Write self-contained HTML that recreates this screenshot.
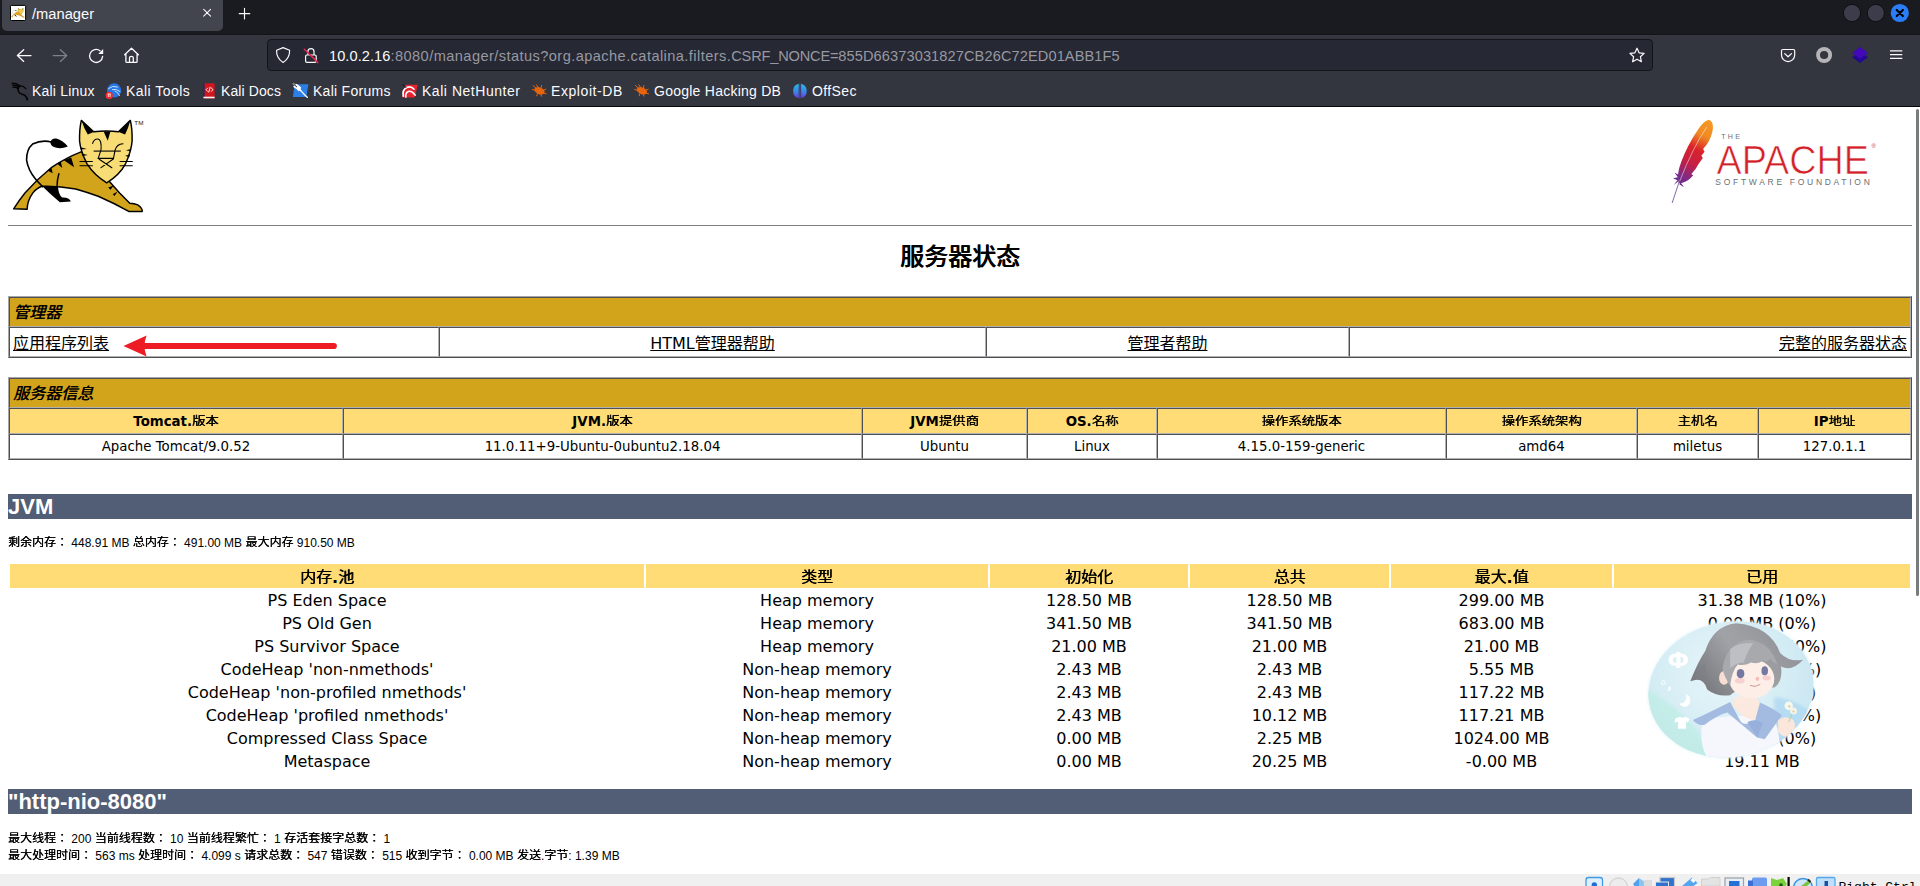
<!DOCTYPE html>
<html>
<head>
<meta charset="utf-8">
<title>/manager</title>
<style>
html,body{margin:0;padding:0;}
body{width:1920px;height:886px;overflow:hidden;position:relative;background:#fff;font-family:"Liberation Sans","Noto Sans CJK JP",sans-serif;color:#000;}
.abs{position:absolute;}
/* ---------- browser chrome ---------- */
#tabbar{left:0;top:0;width:1920px;height:35px;background:#1a1b20;}
#tab{left:2px;top:0;width:221px;height:31px;background:#43454e;border-radius:0 0 5px 5px;}
#tabtitle{left:32px;top:5.3px;font-size:14.7px;line-height:18px;color:#fbfbfe;white-space:nowrap;}
#toolbar{left:0;top:35px;width:1920px;height:71px;background:#33353f;}
#chromeline{left:0;top:106px;width:1920px;height:1px;background:#07080c;}
#urlbar{left:267px;top:39px;width:1384px;height:30px;background:#262833;border:1px solid #14151a;border-radius:4px;box-sizing:content-box;}
#url{left:329px;top:46.7px;font-size:14.6px;letter-spacing:0.245px;line-height:18px;color:#9899a2;white-space:nowrap;}
#url b{font-weight:normal;color:#fbfbfe;}
#u1{letter-spacing:0.07px;}
#u2{letter-spacing:0.43px;}
#u3{letter-spacing:-0.18px;}
#u4{letter-spacing:0.10px;}
.bm{top:82px;font-size:14px;line-height:18px;color:#fbfbfe;white-space:nowrap;}
/* ---------- page ---------- */
.cj{font-weight:500;text-shadow:0.55px 0 0 currentColor;}
.hdr .cj{font-weight:400;text-shadow:0.5px 0 0 currentColor;display:inline-block;transform:scaleY(0.88);transform-origin:50% 48%;}
th .cj,.title .cj{font-weight:400;text-shadow:0.6px 0 0 currentColor;}
th .cj{display:inline-block;transform:scaleY(0.94);transform-origin:50% 10%;}
p.s i{font-style:normal;display:inline-block;transform:scaleY(0.9);transform-origin:50% 15%;text-shadow:0.3px 0 0 currentColor;}
.dv{font-family:"DejaVu Sans","Noto Sans CJK JP",sans-serif;}
table{border-collapse:separate;}
.t1{left:8px;width:1904px;border-spacing:0;border:1px solid;border-color:#a6a6a6 #505054 #505054 #a6a6a6;table-layout:fixed;}
.t1 td{border:1px solid;border-color:#505054 #b0b0b0 #b0b0b0 #505054;padding:0 3px;overflow:hidden;white-space:nowrap;box-sizing:border-box;}
td.title{background:#D2A41C;font-weight:bold;font-style:italic;font-size:16px;text-align:left;height:30px;padding-bottom:2px;}
td.row{font-size:16px;height:30px;}
td.row a{color:#000;text-decoration:underline;}
td.hdr{background:#FFDC75;font-weight:bold;font-size:13.33px;text-align:center;height:26px;padding-bottom:2px;}
td.dat{font-size:13.33px;text-align:center;height:25px;}
h1{position:absolute;left:8px;width:1904px;height:25px;margin:0;background:#525D76;color:#fff;font-size:22px;line-height:25px;font-weight:bold;font-family:"Liberation Sans","Noto Sans CJK JP",sans-serif;white-space:nowrap;}
p.s{position:absolute;left:8px;margin:0;font-size:12px;line-height:17px;white-space:nowrap;}
.t2{left:8px;width:1904px;border-spacing:2px;table-layout:fixed;}
.t2 th{background:#FFDC75;font-weight:bold;font-size:16px;height:24px;padding:0;text-align:center;white-space:nowrap;}
.t2 td{font-size:16px;height:21px;padding:0;text-align:center;white-space:nowrap;line-height:21px;}
</style>
</head>
<body>
<!-- ======== BROWSER CHROME ======== -->
<div id="tabbar" class="abs"></div>
<div id="tab" class="abs"></div>
<div id="tabtitle" class="abs">/manager</div>
<div id="toolbar" class="abs"></div>
<div id="chromeline" class="abs"></div>
<div class="abs" style="left:0;top:34px;width:1920px;height:1px;background:#131418"></div>
<div class="abs" style="left:0;top:35px;width:1920px;height:1px;background:#363842"></div>
<div id="urlbar" class="abs"></div>
<div id="url" class="abs"><b id="u1">10.0.2.16</b><span id="u2">:8080/manager/status?org.apache.catalina.filters.</span><span id="u3">CSRF_NONCE=</span><span id="u4">855D66373031827CB26C72ED01ABB1F5</span></div>
<div class="abs bm" style="left:32px;letter-spacing:0.21px">Kali Linux</div>
<div class="abs bm" style="left:126px;letter-spacing:0.45px">Kali Tools</div>
<div class="abs bm" style="left:221px;letter-spacing:0.10px">Kali Docs</div>
<div class="abs bm" style="left:313px;letter-spacing:0.27px">Kali Forums</div>
<div class="abs bm" style="left:422px;letter-spacing:0.53px">Kali NetHunter</div>
<div class="abs bm" style="left:551px;letter-spacing:0.58px">Exploit-DB</div>
<div class="abs bm" style="left:654px;letter-spacing:0.25px">Google Hacking DB</div>
<div class="abs bm" style="left:812px;letter-spacing:0.40px">OffSec</div>
<!--CHROME-ICONS-START-->
<svg class="abs" style="left:0;top:0" width="1920" height="107" viewBox="0 0 1920 107" fill="none">
<!-- favicon -->
<rect x="10.5" y="5.4" width="15.1" height="15.1" rx="0.8" fill="#fff" stroke="#000"/>
<g transform="translate(9.9,6.0) scale(0.015)">
<path d="M350 286 Q285 270 222 300 Q180 335 181 410 Q192 480 243 540" stroke="#bbb" stroke-width="30" fill="none"/>
<path d="M343 290 Q350 258 384 262 Q430 275 462 317 Q420 334 385 326 Q345 318 343 290Z" fill="#333"/>
<path d="M283 583 L395 592 Q398 640 423 665 Q470 662 483 692 L408 697 Q345 645 283 583Z" fill="#222"/>
<path d="M556 352 Q440 398 347 463 Q254 538 170 633 Q128 685 93 741 L185 744 Q186 686 224 633 Q250 600 287 588 Q393 584 516 606 Q600 630 669 656 Q784 706 877 759 L969 759 Q972 738 938 714 Q915 705 884 704 L815 633 L750 560 Z" fill="#e0a21d" stroke="#b98a1c" stroke-width="14"/>
<path d="M554 139 Q540 200 542 279 Q548 345 592 433 Q640 510 727 564 Q815 510 856 433 Q895 345 900 279 Q902 200 888 139 L807 216 Q727 206 638 216 Z" fill="#f5cb4a" stroke="#8a7430" stroke-width="18"/>
<path d="M556 142 L642 217 L598 235Z M887 142 L805 217 L852 235Z" fill="#444"/>
</g>
<!-- tab close / new tab -->
<path d="M203.700 9.300l6.900 6.900m0-6.900l-6.900 6.900" stroke="#fbfbfe" stroke-width="1.050" stroke-linecap="round"/>
<path d="M239.200 13.600h10.600M244.500 8.300v10.600" stroke="#fbfbfe" stroke-width="1.150" stroke-linecap="round"/>
<!-- window buttons -->
<circle cx="1852" cy="13" r="8.6" fill="#3b3e4a" stroke="#0f0f13" stroke-width="1"/>
<circle cx="1875.8" cy="13" r="8.6" fill="#3b3e4a" stroke="#0f0f13" stroke-width="1"/>
<circle cx="1899.8" cy="13" r="9.1" fill="#2b7df7"/>
<path d="M1896.7 9.9l6.2 6.2m0-6.200l-6.2 6.2" stroke="#000" stroke-width="2.1" stroke-linecap="round"/>
<!-- back / forward / reload / home -->
<path d="M31 55.6H17.4M23.7 49.8l-6.3 5.8 6.3 5.8" stroke="#fbfbfe" stroke-width="1.3" stroke-linecap="round" stroke-linejoin="round"/>
<path d="M53.2 55.6h13.4M60.4 49.8l6.3 5.8-6.3 5.8" stroke="#7f8088" stroke-width="1.3" stroke-linecap="round" stroke-linejoin="round"/>
<path d="M102.6 56.4A6.5 6.5 0 1 1 100.2 50.9" stroke="#fbfbfe" stroke-width="1.3" stroke-linecap="round"/>
<path d="M103.2 49v4.9h-4.9z" fill="#fbfbfe"/>
<path d="M124.6 54.8l6.9-6.5 6.9 6.5M125.9 54v7.4q0 1 1 1h9.2q1 0 1-1V54M129.5 62.2v-4.4q0-1.4 1.9-1.4t1.9 1.4v4.4" stroke="#fbfbfe" stroke-width="1.3" stroke-linecap="round" stroke-linejoin="round"/>
<!-- shield -->
<path d="M283.1 47.6l6.5 2.6q.4 7.700-6.500 12.300q-6.900-4.600-6.500-12.300z" stroke="#fbfbfe" stroke-width="1.2" stroke-linejoin="round"/>
<!-- lock + slash -->
<rect x="305.600" y="55" width="10.600" height="7.400" rx="1.300" stroke="#fbfbfe" stroke-width="1.200"/>
<path d="M307.900 55v-3.400a3.050 3.050 0 0 1 6.100 0v3.400" stroke="#fbfbfe" stroke-width="1.200"/>
<path d="M304.300 49.300l13.600 13.300" stroke="#e22850" stroke-width="1.500" stroke-linecap="round"/>
<!-- star -->
<path d="M1637 48.200l2.100 4.600 5 .6-3.700 3.400 1 4.900-4.400-2.500-4.400 2.500 1-4.900-3.700-3.400 5-.6z" stroke="#fbfbfe" stroke-width="1.200" stroke-linejoin="round"/>
<!-- pocket -->
<path d="M1782.800 49.500h10.600q1.300 0 1.300 1.300v4.200a6.600 6.600 0 0 1-13.200 0v-4.200q0-1.300 1.300-1.300z" stroke="#fbfbfe" stroke-width="1.200"/>
<path d="M1784.700 53.600l3.400 3.200 3.400-3.200" stroke="#fbfbfe" stroke-width="1.200" stroke-linecap="round" stroke-linejoin="round"/>
<!-- ring -->
<circle cx="1824.100" cy="55" r="6.050" stroke="#b5b5b7" stroke-width="3.900"/>
<!-- purple layers -->
<path d="M1860.100 51.300l7.900 5.900-7.900 5.900-7.900-5.900z" fill="#23098f"/>
<path d="M1860.100 47l7.900 5.900-7.900 5.900-7.900-5.900z" fill="#4309b8"/>
<!-- hamburger -->
<path d="M1890 50.800h12.300M1890 54.600h12.300M1890 58.400h12.300" stroke="#fbfbfe" stroke-width="1.300"/>

<!-- bookmark icons -->
<!-- kali dragon -->
<path d="M12.200 83.200q5 .2 7.600 2.600M12.600 85.200q4 0 6.600 1.800M13 87.200q3 0 5 1.200M19.800 85.800q-2.600 2.400-1.600 5.200 1 2.600 4.600 3.400 3.200.8 3.800 3.600l.6 2M19.600 86q3.400-.4 6.200 2.600M22.800 94.400q2.600 1.200 4.800 4.400" stroke="#000" stroke-width="1.300" stroke-linecap="round"/>
<!-- kali tools -->
<circle cx="114.100" cy="90.400" r="7.100" fill="#2777e4"/>
<path d="M108.500 88.500q4-3.500 9-1.500M112.500 89.500q4-1 7.500 2M115 91q3 1 4.500 4.500" stroke="#cfe2fb" stroke-width="1" stroke-linecap="round"/>
<circle cx="109.200" cy="95.400" r="3.600" fill="#ef2b2b"/>
<path d="M108.300 94v3M110.100 94v3M107.600 94h3.200" stroke="#fff" stroke-width=".8"/>
<!-- kali docs -->
<rect x="203" y="83.300" width="11.600" height="15.200" rx="1" fill="#d4161c"/>
<rect x="203" y="83.300" width="1.600" height="15.200" fill="#1b2a6b"/>
<rect x="203.400" y="96.700" width="11.200" height="1.600" fill="#f3f3f3"/>
<path d="M207.700 88l-1.700 1.700 1.700 1.700M211.300 88l1.700 1.700-1.700 1.700M210.200 87.300l-1.400 4.800" stroke="#fff" stroke-width=".9" stroke-linecap="round" stroke-linejoin="round"/>
<!-- kali forums -->
<path d="M294.600 84.200h13.900l-2.300 12.800h-13.300z" fill="#2d7fe8"/>
<path d="M293.200 83.600q5.500 3.500 8.500 8 2.500 3 5.600 5.600M294 86.500q3 1.500 5 4M296.500 84.500q2.500 1.500 4 3.500" stroke="#fff" stroke-width="1.400" stroke-linecap="round"/>
<path d="M292.700 83.200l4 3.600" stroke="#111" stroke-width=".9" stroke-linecap="round"/>
<!-- nethunter -->
<path d="M405.500 84.800h12.400l-3.300 12.600h-12.400z" fill="#e8222e"/>
<path d="M403.300 96.200q-1.300-6 3.400-8.600 4.300-2 7.300 1.600M405.800 97q-.6-4.200 2.500-5.500 3.200-1.200 6.800 3.500" stroke="#fff" stroke-width="1.700" stroke-linecap="round"/>
<path d="M402.600 84.300l3.400 3.400" stroke="#111" stroke-width=".9" stroke-linecap="round"/>
<!-- exploit-db bug -->
<g id="bug"><ellipse cx="539.500" cy="90.800" rx="5.400" ry="3.400" transform="rotate(22 539.500 90.800)" fill="#e8640c"/>
<path d="M533 85.500l3.500 3M536.500 84.800l2 3.200M541.500 85.500l-.5 2.800M545.800 89.200l-2.500 1M546.200 93.800l-2.800-.8M541.500 96.200l-.8-2.400M536.800 95.800l.6-2.300M532.300 89.500l3 .8" stroke="#e8640c" stroke-width="1" stroke-linecap="round"/></g>
<use href="#bug" x="102.400" y="0"/>
<!-- offsec -->
<defs><linearGradient id="og" x1="0" y1="0" x2="0" y2="1"><stop offset="0" stop-color="#25bfe6"/><stop offset=".6" stop-color="#3f7fe6"/><stop offset="1" stop-color="#6a3be0"/></linearGradient></defs>
<path d="M798.700 83.800a7.300 7.300 0 0 0 0 14.200z" fill="url(#og)"/>
<path d="M801.100 83.800a7.300 7.300 0 0 1 0 14.200z" fill="url(#og)"/>
<path d="M799.900 83.600v14.800" stroke="#5a4fe0" stroke-width=".9"/>
</svg>
<!--CHROME-ICONS-END-->

<!-- ======== PAGE ======== -->
<!--LOGOS-START-->
<!-- Tomcat logo: coordinates in 6.8125x zoom space of region (0,100) -->
<svg class="abs" style="left:0;top:100px" width="160" height="130" viewBox="0 0 1090 885.6" fill="none">
<!-- far hind leg (black) -->
<path d="M283 583 L395 592 Q398 640 423 665 Q470 662 483 692 L408 697 Q345 645 283 583Z" fill="#000"/>
<!-- body -->
<path d="M556 352 Q440 398 347 463 Q254 538 170 633 Q128 685 93 741 L185 744 Q186 686 224 633 Q250 600 287 588 Q393 584 516 606 Q600 630 669 656 Q784 706 877 759 L969 759 Q972 738 938 714 Q915 705 884 704 L815 633 L750 560 Z" fill="#D2A41C" stroke="#000" stroke-width="10" stroke-linejoin="round"/>
<!-- thigh line -->
<path d="M401 502 Q388 545 388 594" stroke="#000" stroke-width="10" stroke-linecap="round"/>
<!-- back stripes -->
<path d="M433 409 L485 391 L505 458Z M388 432 L414 419 L424 464Z M323 480 L350 459 L359 499Z" fill="#000"/>
<path d="M737 596 L774 582 L753 612Z M768 642 L801 624 L780 654Z" fill="#000"/>
<!-- tail (over body) -->
<path d="M350 286 Q285 270 222 300 Q180 335 181 410 Q192 480 243 540 Q262 562 290 590" stroke="#000" stroke-width="11" stroke-linecap="round"/>
<path d="M343 290 Q350 258 384 262 Q430 275 462 317 Q420 334 385 326 Q345 318 343 290Z" fill="#000"/>
<!-- head -->
<path d="M554 139 Q540 200 542 279 Q548 345 592 433 Q640 510 727 564 Q815 510 856 433 Q895 345 900 279 Q902 200 888 139 L807 216 Q727 206 638 216 Z" fill="#F8DC75" stroke="#000" stroke-width="10" stroke-linejoin="round"/>
<!-- ears -->
<path d="M556 142 L642 217 L598 235 Q572 195 556 142Z M887 142 L805 217 L852 235 Q874 195 887 142Z" fill="#000"/>
<!-- forehead stripes -->
<path d="M706 214 L752 214 L734 278Z" fill="#000"/>
<!-- eyes -->
<path d="M631 296 Q640 264 668 266 Q694 272 688 340 L669 398" stroke="#000" stroke-width="7.5" stroke-linecap="round"/>
<path d="M838 298 Q795 300 784 342 L773 398" stroke="#000" stroke-width="7.5" stroke-linecap="round"/>
<path d="M638 348 H823" stroke="#000" stroke-width="7.5"/>
<!-- cheek stripes -->
<path d="M548 322 L592 334 L550 338Z M556 364 L598 374 L562 382Z M894 334 L858 342 L892 350Z M886 372 L852 380 L880 390Z" fill="#000"/>
<!-- nose -->
<path d="M669 398 H773 M676 404 L762 461 M772 402 L688 461" stroke="#000" stroke-width="7.5" stroke-linecap="round"/>
<!-- whiskers -->
<path d="M542 419 H632 M542 448 H632 M815 419 H904 M815 448 H904" stroke="#000" stroke-width="8"/>
<text x="915" y="170" font-family="Liberation Sans, sans-serif" font-size="42" fill="#222" textLength="62" lengthAdjust="spacingAndGlyphs">TM</text>
</svg>
<!-- Apache logo: coordinates in 6.814x zoom space of region (1640,105) -->
<svg class="abs" style="left:1640px;top:105px" width="280" height="130" viewBox="0 0 1908 885.9" fill="none">
<defs>
<linearGradient id="fg" x1="470" y1="100" x2="230" y2="560" gradientUnits="userSpaceOnUse">
<stop offset="0" stop-color="#f69923"/><stop offset=".22" stop-color="#f08a22"/><stop offset=".42" stop-color="#d9232b"/><stop offset=".62" stop-color="#c41f45"/><stop offset=".82" stop-color="#7f2a86"/><stop offset="1" stop-color="#5d2d8e"/>
</linearGradient>
</defs>
<path d="M468 100 Q500 108 497 160 Q490 215 455 270 L430 300 L440 318 L418 345 L428 362 L400 400 Q380 440 350 470 L362 478 Q335 515 290 530 Q262 540 262 520 Q250 470 280 390 Q320 280 390 175 Q430 110 468 100Z" fill="url(#fg)"/>
<path d="M262 520 L230 545 L255 512 L225 500 L258 492 L235 460 L268 478Z" fill="#6b2c8a"/>
<path d="M275 525 L300 560 L268 540Z" fill="#6b2c8a"/>
<path d="M268 520 L220 665" stroke="#5a2c86" stroke-width="5" stroke-linecap="round"/>
<path d="M455 150 Q360 290 270 520" stroke="#fff" stroke-width="4" opacity=".85"/>
<g font-family="Liberation Sans, sans-serif">
<text x="553" y="230" font-size="48" fill="#6d6e71" textLength="128" lengthAdjust="spacing">THE</text>
<text x="521" y="468" font-size="280" fill="#d22128" stroke="#fff" stroke-width="5" textLength="1040" lengthAdjust="spacingAndGlyphs">APACHE</text>
<text x="513" y="547" font-size="58" fill="#6d6e71" textLength="1053" lengthAdjust="spacing">SOFTWARE FOUNDATION</text>
<text x="1578" y="296" font-size="40" fill="#d22128">®</text>
</g>
</svg>
<!--LOGOS-END-->
<div class="abs" style="left:8px;top:225px;width:1904px;height:1px;background:#808080"></div>
<div class="abs dv" id="ptitle" style="left:0;top:238.7px;width:1920px;text-align:center;font-size:24px;font-weight:bold;line-height:36px;"><span class="cj">服务器状态</span></div>

<table class="abs t1 dv" style="top:296px">
<colgroup><col style="width:430px"><col style="width:547px"><col style="width:363px"><col style="width:562px"></colgroup>
<tr><td class="title" colspan="4"><span class="cj">管理器</span></td></tr>
<tr><td class="row" style="text-align:left"><a>应用程序列表</a></td><td class="row" style="text-align:center"><a>HTML管理器帮助</a></td><td class="row" style="text-align:center"><a>管理者帮助</a></td><td class="row" style="text-align:right"><a>完整的服务器状态</a></td></tr>
</table>
<!--ARROW-START-->
<svg class="abs" style="left:110px;top:326px" width="240" height="36" viewBox="0 0 240 36"><path d="M13.500 20L36.600 9.400Q32.400 20 36.600 30.400Z" fill="#ed1c24"/><path d="M33 20H223.800" stroke="#ed1c24" stroke-width="6.200" stroke-linecap="round"/></svg>
<!--ARROW-END-->

<table class="abs t1 dv" style="top:377px">
<colgroup><col style="width:334px"><col style="width:519px"><col style="width:165px"><col style="width:130px"><col style="width:289px"><col style="width:191px"><col style="width:121px"><col style="width:153px"></colgroup>
<tr><td class="title" colspan="8"><span class="cj">服务器信息</span></td></tr>
<tr><td class="hdr">Tomcat.<span class="cj">版本</span></td><td class="hdr">JVM.<span class="cj">版本</span></td><td class="hdr">JVM<span class="cj">提供商</span></td><td class="hdr">OS.<span class="cj">名称</span></td><td class="hdr"><span class="cj">操作系统版本</span></td><td class="hdr"><span class="cj">操作系统架构</span></td><td class="hdr"><span class="cj">主机名</span></td><td class="hdr">IP<span class="cj">地址</span></td></tr>
<tr><td class="dat">Apache Tomcat/9.0.52</td><td class="dat">11.0.11+9-Ubuntu-0ubuntu2.18.04</td><td class="dat">Ubuntu</td><td class="dat">Linux</td><td class="dat">4.15.0-159-generic</td><td class="dat">amd64</td><td class="dat">miletus</td><td class="dat">127.0.1.1</td></tr>
</table>

<h1 style="top:494px">JVM</h1>
<p class="s" style="top:534.6px"><i>剩余内存：</i> 448.91 MB <i>总内存：</i> 491.00 MB <i>最大内存</i> 910.50 MB</p>

<table class="abs t2 dv" style="top:562px">
<colgroup><col style="width:634px"><col style="width:342px"><col style="width:198px"><col style="width:199px"><col style="width:221px"><col style="width:296px"></colgroup>
<tr><th><span class="cj">内存</span>.<span class="cj">池</span></th><th><span class="cj">类型</span></th><th><span class="cj">初始化</span></th><th><span class="cj">总共</span></th><th><span class="cj">最大</span>.<span class="cj">值</span></th><th><span class="cj">已用</span></th></tr>
<tr><td>PS Eden Space</td><td>Heap memory</td><td>128.50 MB</td><td>128.50 MB</td><td>299.00 MB</td><td>31.38 MB (10%)</td></tr>
<tr><td>PS Old Gen</td><td>Heap memory</td><td>341.50 MB</td><td>341.50 MB</td><td>683.00 MB</td><td>0.09 MB (0%)</td></tr>
<tr><td>PS Survivor Space</td><td>Heap memory</td><td>21.00 MB</td><td>21.00 MB</td><td>21.00 MB</td><td>10.50 MB (50%)</td></tr>
<tr><td>CodeHeap 'non-nmethods'</td><td>Non-heap memory</td><td>2.43 MB</td><td>2.43 MB</td><td>5.55 MB</td><td>1.17 MB (21%)</td></tr>
<tr><td>CodeHeap 'non-profiled nmethods'</td><td>Non-heap memory</td><td>2.43 MB</td><td>2.43 MB</td><td>117.22 MB</td><td>1.62 MB (1%)</td></tr>
<tr><td>CodeHeap 'profiled nmethods'</td><td>Non-heap memory</td><td>2.43 MB</td><td>10.12 MB</td><td>117.21 MB</td><td>10.06 MB (8%)</td></tr>
<tr><td>Compressed Class Space</td><td>Non-heap memory</td><td>0.00 MB</td><td>2.25 MB</td><td>1024.00 MB</td><td>2.03 MB (0%)</td></tr>
<tr><td>Metaspace</td><td>Non-heap memory</td><td>0.00 MB</td><td>20.25 MB</td><td>-0.00 MB</td><td>19.11 MB</td></tr>
</table>

<h1 style="top:789px">"http-nio-8080"</h1>
<p class="s" style="top:831px"><i>最大线程：</i> 200 <i>当前线程数：</i> 10 <i>当前线程繁忙：</i> 1 <i>存活套接字总数：</i> 1<br><i>最大处理时间：</i> 563 ms <i>处理时间：</i> 4.099 s <i>请求总数：</i> 547 <i>错误数：</i> 515 <i>收到字节：</i> 0.00 MB <i>发送</i>.<i>字节</i>: 1.39 MB</p>

<!--AVATAR-START-->
<!-- avatar overlay: coordinates in 5.211x zoom space of region (1640,605) -->
<svg class="abs" style="left:1640px;top:605px" width="180" height="170" viewBox="0 0 938 886" fill="none">
<defs>
<radialGradient id="abg" cx="0.45" cy="0.4" r="0.75"><stop offset="0" stop-color="#e6f5fa"/><stop offset=".55" stop-color="#cfeaf3"/><stop offset="1" stop-color="#b4dcef"/></radialGradient>
<linearGradient id="mint" x1="0" y1="0" x2="1" y2="1"><stop offset="0" stop-color="#bfeee6" stop-opacity="0"/><stop offset="1" stop-color="#aeeadf"/></linearGradient>
<linearGradient id="hair" x1="0" y1="0.7" x2="1" y2="0.2"><stop offset="0" stop-color="#6c6e73"/><stop offset=".45" stop-color="#999ba0"/><stop offset="1" stop-color="#85878c"/></linearGradient>
<filter id="b3" x="-20%" y="-20%" width="140%" height="140%"><feGaussianBlur stdDeviation="3"/></filter>
<filter id="b8" x="-20%" y="-20%" width="140%" height="140%"><feGaussianBlur stdDeviation="9"/></filter>
<clipPath id="acl"><ellipse cx="474" cy="440" rx="432" ry="352" transform="rotate(-10 474 440)"/></clipPath>
</defs>
<ellipse cx="474" cy="440" rx="436" ry="356" transform="rotate(-10 474 440)" fill="#e9f6fa" filter="url(#b8)"/>
<g clip-path="url(#acl)">
<rect width="938" height="886" fill="url(#abg)"/>
<path d="M0 420 Q200 520 330 700 L420 886 L0 886Z" fill="#b5ece0" filter="url(#b8)" opacity=".65"/>
<path d="M700 480 Q860 500 938 620 L938 886 L700 886Z" fill="#a9d6f0" filter="url(#b8)" opacity=".8"/>
<!-- back hair -->
<g filter="url(#b3)">
<path d="M500 95 Q380 110 340 240 Q300 300 262 398 Q330 370 350 440 Q400 480 470 470 Q520 420 700 430 Q745 400 735 320 Q790 350 850 285 Q780 300 730 250 Q680 110 500 95Z" fill="url(#hair)"/>
<!-- shirt -->
<path d="M330 600 Q300 700 350 800 L720 790 Q740 700 700 590 Q520 560 330 600Z" fill="#f6f7fc"/>
<!-- collar -->
<path d="M470 505 Q360 560 275 600 Q300 630 335 625 Q400 575 455 560 L610 690 L650 700 L740 575 Q700 540 620 505 L600 600 Q540 640 520 600Z" fill="#9cb6df"/>
<path d="M560 610 Q600 590 640 615 L612 690Z" fill="#8eaad8"/>
<!-- neck + face -->
<path d="M495 480 L480 520 Q540 600 600 600 L625 510 L600 470Z" fill="#fbe6dc"/>
<ellipse cx="582" cy="385" rx="118" ry="102" fill="#fdeee6"/>
<ellipse cx="438" cy="380" rx="26" ry="36" fill="#f8dccf"/>
<!-- hand -->
<path d="M720 600 Q760 570 800 600 Q820 640 790 680 Q750 700 720 660Z" fill="#fbe4d8"/>
<!-- fringe -->
<path d="M430 330 Q450 200 560 180 Q680 190 715 310 Q690 300 680 280 Q660 300 640 290 Q610 310 580 300 Q540 320 510 310 Q480 340 470 420 Q440 380 430 330Z" fill="#a0a2a7"/>
<path d="M470 230 Q520 190 590 200 Q560 240 540 300 Q500 300 470 330Z" fill="#c2c4c9" opacity=".7"/>
<path d="M340 300 Q300 350 275 395 Q320 365 350 420Z" fill="#74767b" opacity=".7"/>
<!-- eyes, blush, mouth -->
<ellipse cx="524" cy="358" rx="20" ry="25" fill="#6a6d98"/>
<ellipse cx="650" cy="343" rx="17" ry="24" fill="#6a6d98"/>
<ellipse cx="520" cy="395" rx="26" ry="14" fill="#f7c3c6" opacity=".8"/>
<ellipse cx="660" cy="380" rx="22" ry="13" fill="#f7c3c6" opacity=".8"/>
<ellipse cx="612" cy="385" rx="9" ry="11" fill="#f3a9a0" opacity=".8"/>
</g>
<path d="M575 420 Q600 432 625 415" stroke="#b5766f" stroke-width="4" stroke-linecap="round"/>
<!-- flower -->
<g filter="url(#b3)"><circle cx="775" cy="525" r="22" fill="#f6f7ee"/><circle cx="800" cy="552" r="18" fill="#f3f2e4"/><circle cx="778" cy="528" r="6" fill="#d9c77a"/><circle cx="800" cy="555" r="5" fill="#d9c77a"/><path d="M790 570 L775 610" stroke="#9cc48e" stroke-width="4"/></g>
<!-- left white glyphs -->
<g fill="#fff" stroke="#fff">
<text x="143" y="330" font-family="DejaVu Sans, sans-serif" font-weight="bold" font-size="112" stroke="none">Ф</text>
<circle cx="122" cy="405" r="10" fill="none" stroke-width="5"/>
<text x="142" y="440" font-family="DejaVu Sans, sans-serif" font-weight="bold" font-size="60" stroke="none">,</text>
<path d="M240 462 Q280 490 250 525 Q225 540 205 515 Q250 510 240 462Z" stroke="none"/>
<path d="M185 590 L210 582 Q222 592 234 582 L258 592 L250 612 L240 608 L240 645 L198 645 L198 608 L178 612Z" stroke="none"/>
</g>
<rect width="938" height="886" fill="#fff" opacity=".08"/>
</g>
</svg>
<!--AVATAR-END-->
<!-- scrollbar -->
<div class="abs" style="left:1916px;top:109px;width:3px;height:487px;background:#797c7d;border-radius:1.5px"></div>
<!-- VM status bar -->
<div class="abs" id="vmbar" style="left:0;top:874px;width:1920px;height:12px;background:#f0f0f0;overflow:hidden"><!--VM-START-->
<svg width="1920" height="12" viewBox="0 874 1920 12" style="position:absolute;left:0;top:0">
<rect x="1586" y="877.500" width="16.500" height="14" rx="2.500" fill="#dff0fc" stroke="#3f9be8" stroke-width="1.300"/><circle cx="1594.300" cy="885" r="2.700" fill="#1c6fd0"/>
<circle cx="1618.500" cy="887" r="9" fill="#ececec" stroke="#d4d4d4" stroke-width="1.300"/>
<path d="M1633 884L1639 878V892Z" fill="#4ea3ec"/><path d="M1639 878l6 4v10h-6z" fill="#8cc4f4"/><rect x="1644" y="880" width="8" height="8" fill="#dcdcdc"/>
<rect x="1660" y="877.500" width="14.500" height="10" fill="#2f73cf" stroke="#c9c9c9" stroke-width="1.200"/><rect x="1655.500" y="882" width="13" height="8" fill="#2f73cf" stroke="#e6e6e6" stroke-width="1"/>
<path d="M1682 886l10-8.500 5.500 5.500-8 6z" fill="#55a6ee"/><rect x="1691" y="879" width="4" height="3" fill="#fff" transform="rotate(40 1693 880.500)"/>
<path d="M1701.500 886v-7h7l2-1.500h9.500v8.500z" fill="#e3e3e3" stroke="#d0d0d0"/>
<rect x="1725" y="878" width="18.500" height="10" fill="#e8eef6" stroke="#9aa0a8" stroke-width="1.200"/><rect x="1729" y="881" width="10.500" height="6" fill="#2470d8"/>
<rect x="1752" y="877.500" width="15" height="10" rx="1.500" fill="#6d9bf0"/><rect x="1748" y="880.500" width="5" height="6" fill="#3b6fd8"/>
<path d="M1771 878l6 2 6-2 4 6-3 4h-13z" fill="#7bd23a"/><rect x="1787.500" y="877" width="2.200" height="10" fill="#000"/><circle cx="1781" cy="885" r="1.800" fill="#1d5c12"/>
<circle cx="1803" cy="888" r="9.500" fill="#cfe6fa" stroke="#3f96e6" stroke-width="1.600"/><path d="M1801 886l8-6 2 2-7 7z" fill="#7bc043"/><path d="M1808 879.500l2.500 2.500" stroke="#222" stroke-width="2"/>
<rect x="1816.500" y="877.500" width="18.500" height="12" rx="1.500" fill="#bfe0fa" stroke="#55a8ee" stroke-width="1.300"/><path d="M1824.500 881h3.500v6h-3.500z" fill="#1a4fa8"/>
</svg>
<div style="position:absolute;left:1838.500px;top:6.900px;font-family:'Liberation Mono',monospace;font-size:13px;line-height:14px;color:#000;white-space:nowrap">Right Ctrl</div>
<!--VM-END--></div>
</body>
</html>
